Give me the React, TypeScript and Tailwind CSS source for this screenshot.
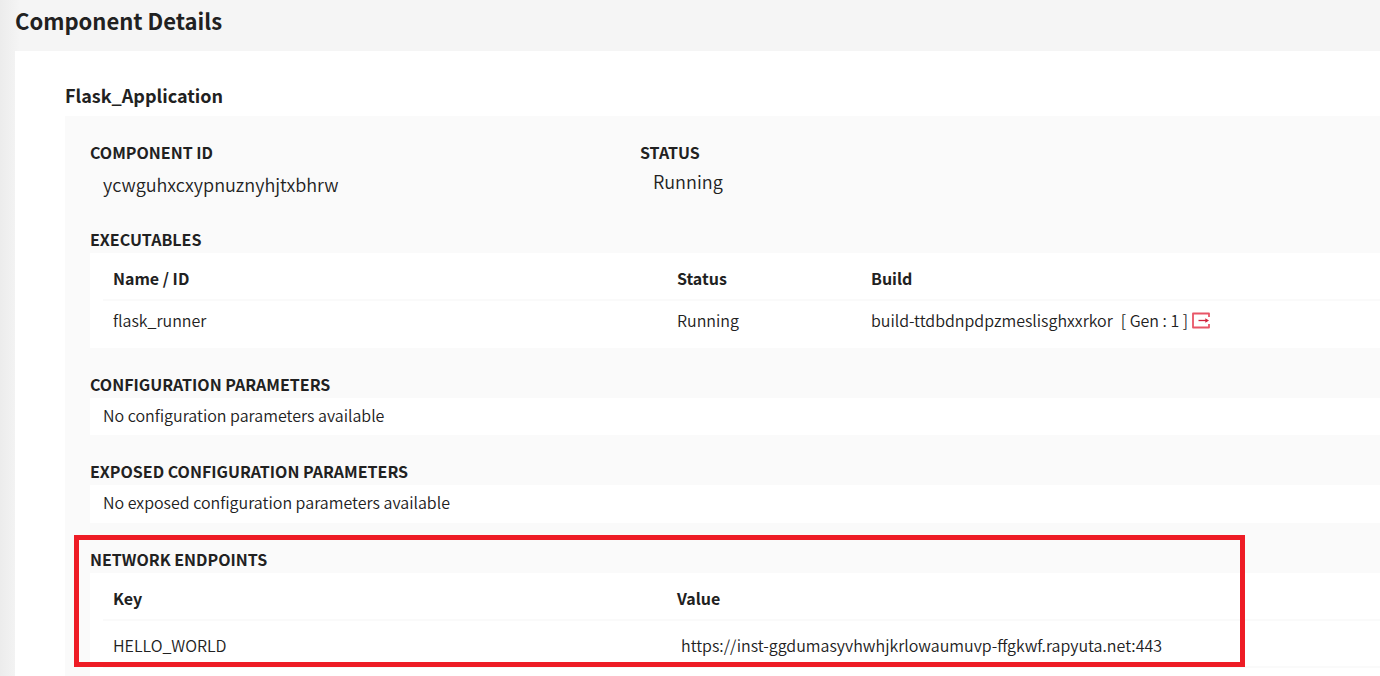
import type { ReactNode } from "react";

function Section({ title, children }: { title: string; children: ReactNode }) {
  return (
    <section>
      <h3 className="h-[26px] text-[16px] leading-[24px] font-bold">{title}</h3>
      <div className="bg-white">{children}</div>
    </section>
  );
}

function GenerationIcon() {
  return (
    <svg width="18" height="18" viewBox="0 0 18 18" fill="none" aria-hidden="true">
      <path d="M17 6V2.5H1v14h16V13" stroke="#e85566" strokeWidth="1.8" strokeLinejoin="round" />
      <path d="M6.5 9.5h8" stroke="#d0233c" strokeWidth="1.3" />
      <path d="M13.3 7.3 17 9.5l-3.7 2.2z" fill="#d0233c" />
    </svg>
  );
}

export default function App() {
  return (
    <div className="flex min-h-screen flex-col bg-[#f5f5f5] bg-[linear-gradient(to_right,#ececec,#f5f5f5_20px)] pl-[15px] font-['Noto_Sans_CJK_SC','Noto_Sans',sans-serif] font-[350] text-[#212121]">
      <h1 className="h-[51px] pt-[4px] text-[22px] leading-[32px] font-bold">Component Details</h1>
      <main className="flex flex-1 flex-col bg-white pt-[32px] pl-[50px]">
        <h2 className="h-[33px] text-[18px] leading-[24px] font-bold">Flask_Application</h2>
        <div className="flex flex-1 flex-col bg-[#fafafa] pt-[24px] pl-[25px]">
          <dl className="flex h-[87px]">
            <div className="w-[550px]">
              <dt className="text-[16px] leading-[24px] font-bold">COMPONENT ID</dt>
              <dd className="pt-[8px] pl-[13px] text-[18px] leading-[24px]">ycwguhxcxypnuznyhjtxbhrw</dd>
            </div>
            <div>
              <dt className="text-[16px] leading-[24px] font-bold">STATUS</dt>
              <dd className="pt-[5px] pl-[13px] text-[18px] leading-[24px]">Running</dd>
            </div>
          </dl>

          <div className="flex flex-col gap-[24px]">
            <Section title="EXECUTABLES">
              <div className="h-[95px] pl-[13px]">
                <table className="w-full table-fixed text-left text-[16px] leading-[24px]">
                  <thead>
                    <tr className="h-[47px] border-b-2 border-[#fafafa]">
                      <th className="w-[564px] pt-[4px] pl-[10px] font-bold">Name / ID</th>
                      <th className="w-[194px] pt-[4px] pl-[10px] font-bold">Status</th>
                      <th className="pt-[4px] pl-[10px] font-bold">Build</th>
                    </tr>
                  </thead>
                  <tbody>
                    <tr className="h-[38px]">
                      <td className="pl-[10px]">flask_runner</td>
                      <td className="pl-[10px]">Running</td>
                      <td className="pl-[10px]">
                        <div className="flex items-center">
                          <span>build-ttdbdnpdpzmeslisghxxrkor</span>
                          <a href="#generation" className="ml-[8px] flex items-center gap-[4px]">
                            [ Gen : 1 ]
                            <GenerationIcon />
                          </a>
                        </div>
                      </td>
                    </tr>
                  </tbody>
                </table>
              </div>
            </Section>

            <Section title="CONFIGURATION PARAMETERS">
              <p className="h-[37px] pt-[5px] pl-[13px] text-[16px] leading-[24px]">
                No configuration parameters available
              </p>
            </Section>

            <Section title="EXPOSED CONFIGURATION PARAMETERS">
              <p className="h-[38px] pt-[5px] pl-[13px] text-[16px] leading-[24px]">
                No exposed configuration parameters available
              </p>
            </Section>

            <div className="relative">
              <Section title="NETWORK ENDPOINTS">
                <div className="pb-[8px] pl-[13px]">
                  <table className="w-full table-fixed text-left text-[16px] leading-[24px]">
                    <thead>
                      <tr className="h-[47px] border-b-2 border-[#fafafa]">
                        <th className="w-[564px] pt-[4px] pl-[10px] font-bold">Key</th>
                        <th className="pt-[4px] pl-[10px] font-bold">Value</th>
                      </tr>
                    </thead>
                    <tbody>
                      <tr className="h-[47px] border-b-2 border-[#fafafa]">
                        <td className="pt-[2px] pl-[10px]">HELLO_WORLD</td>
                        <td className="pt-[2px] pl-[14px]">https://inst-ggdumasyvhwhjkrlowaumuvp-ffgkwf.rapyuta.net:443</td>
                      </tr>
                    </tbody>
                  </table>
                </div>
              </Section>
              <div className="pointer-events-none absolute -top-[12px] right-[135px] bottom-[9px] -left-[16px] border-5 border-[#ee1c25]" />
            </div>
          </div>
        </div>
      </main>
    </div>
  );
}
